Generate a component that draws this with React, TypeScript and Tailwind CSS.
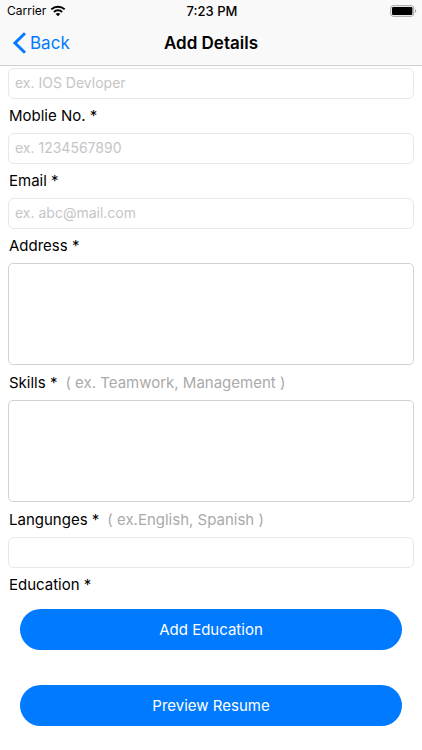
import type { ReactNode } from 'react';

const field = 'block h-[31px] w-full rounded-md border border-[#e8e8e8] bg-white px-1.5 pb-0.5 text-[14px] outline-none placeholder:text-[#c5c5c7]';

function Label({ id, hint, children }: { id: string; hint?: string; children: ReactNode }) {
  return (
    <label htmlFor={id} className="flex h-[34px] items-center gap-2 whitespace-pre pl-px">
      <span>{children}</span>
      {hint && <span className="text-[#aaaaaa]">{hint}</span>}
    </label>
  );
}

function TextRow({ id, label, hint, placeholder }: { id: string; label: string; hint?: string; placeholder?: string }) {
  return (
    <div>
      <Label id={id} hint={hint}>{label}</Label>
      <input id={id} className={field} placeholder={placeholder} />
    </div>
  );
}

function AreaRow({ id, label, hint }: { id: string; label: string; hint?: string }) {
  return (
    <div className="pb-px">
      <Label id={id} hint={hint}>{label}</Label>
      <textarea id={id} className="block h-[102px] w-full resize-none rounded-[5px] border border-[#d2d2d2] bg-white p-1.5 outline-none" />
    </div>
  );
}

function StatusBar() {
  return (
    <div className="grid h-[22px] grid-cols-3 items-center pr-[5px] pl-[7px] text-[12px]">
      <div className="flex items-center gap-1">
        <span>Carrier</span>
        <svg width="16" height="12" viewBox="0 0 16 12" aria-hidden="true">
          <g fill="none" stroke="#000" strokeWidth="2">
            <path d="M1.3 4.400a9.600 9.600 0 0 1 13.400 0" />
            <path d="M3.900 7a5.800 5.800 0 0 1 8.200 0" />
          </g>
          <path d="M8 11.300 5.700 9a3.300 3.300 0 0 1 4.600 0z" />
        </svg>
      </div>
      <span className="text-center text-[13px] font-medium">7:23 PM</span>
      <svg className="justify-self-end" width="27" height="12" viewBox="0 0 27 12" aria-hidden="true">
        <rect x="0.700" y="0.700" width="23" height="10.600" rx="2.500" fill="none" stroke="#a0a0a0" />
        <rect x="2" y="2" width="20.400" height="8" rx="1.300" />
        <path d="M25 4.200v3.600c.8-.3 1.300-1 1.300-1.800S25.800 4.500 25 4.200z" fill="#a0a0a0" />
      </svg>
    </div>
  );
}

const action = 'h-[41px] w-full rounded-full bg-[#007aff] text-white';

export default function App() {
  return (
    <div className="bg-white font-['Inter','Liberation_Sans',sans-serif] text-[15px] leading-5 text-black">
      <header className="border-b border-[#cfcfcf] bg-[#f9f9f9] pb-0.5">
        <StatusBar />
        <nav className="grid h-[41px] grid-cols-3 items-center px-3 text-[17px]">
          <button className="flex items-center gap-1 text-[#007aff]">
            <svg width="14" height="22" viewBox="0 0 14 22" aria-hidden="true">
              <path d="M13 1.200 3 11 13 20.800" fill="none" stroke="#007aff" strokeWidth="3" />
            </svg>
            Back
          </button>
          <h1 className="whitespace-nowrap text-center font-semibold">Add Details</h1>
        </nav>
      </header>
      <form className="px-2 pt-0.5">
        <input aria-label="Designation" className={field} placeholder="ex. IOS Devloper" />
        <TextRow id="mobile" label="Moblie No. *" placeholder="ex. 1234567890" />
        <TextRow id="email" label="Email *" placeholder="ex. abc@mail.com" />
        <AreaRow id="address" label="Address *" />
        <AreaRow id="skills" label="Skills *" hint="( ex. Teamwork, Management )" />
        <TextRow id="languages" label="Langunges *" hint="( ex.English, Spanish )" />
        <h2 className="flex h-[34px] items-center pl-px">Education *</h2>
        <div className="flex flex-col gap-[35px] px-3 pt-[7px] pb-6">
          <button type="button" className={action}>Add Education</button>
          <button type="button" className={action}>Preview Resume</button>
        </div>
      </form>
    </div>
  );
}
